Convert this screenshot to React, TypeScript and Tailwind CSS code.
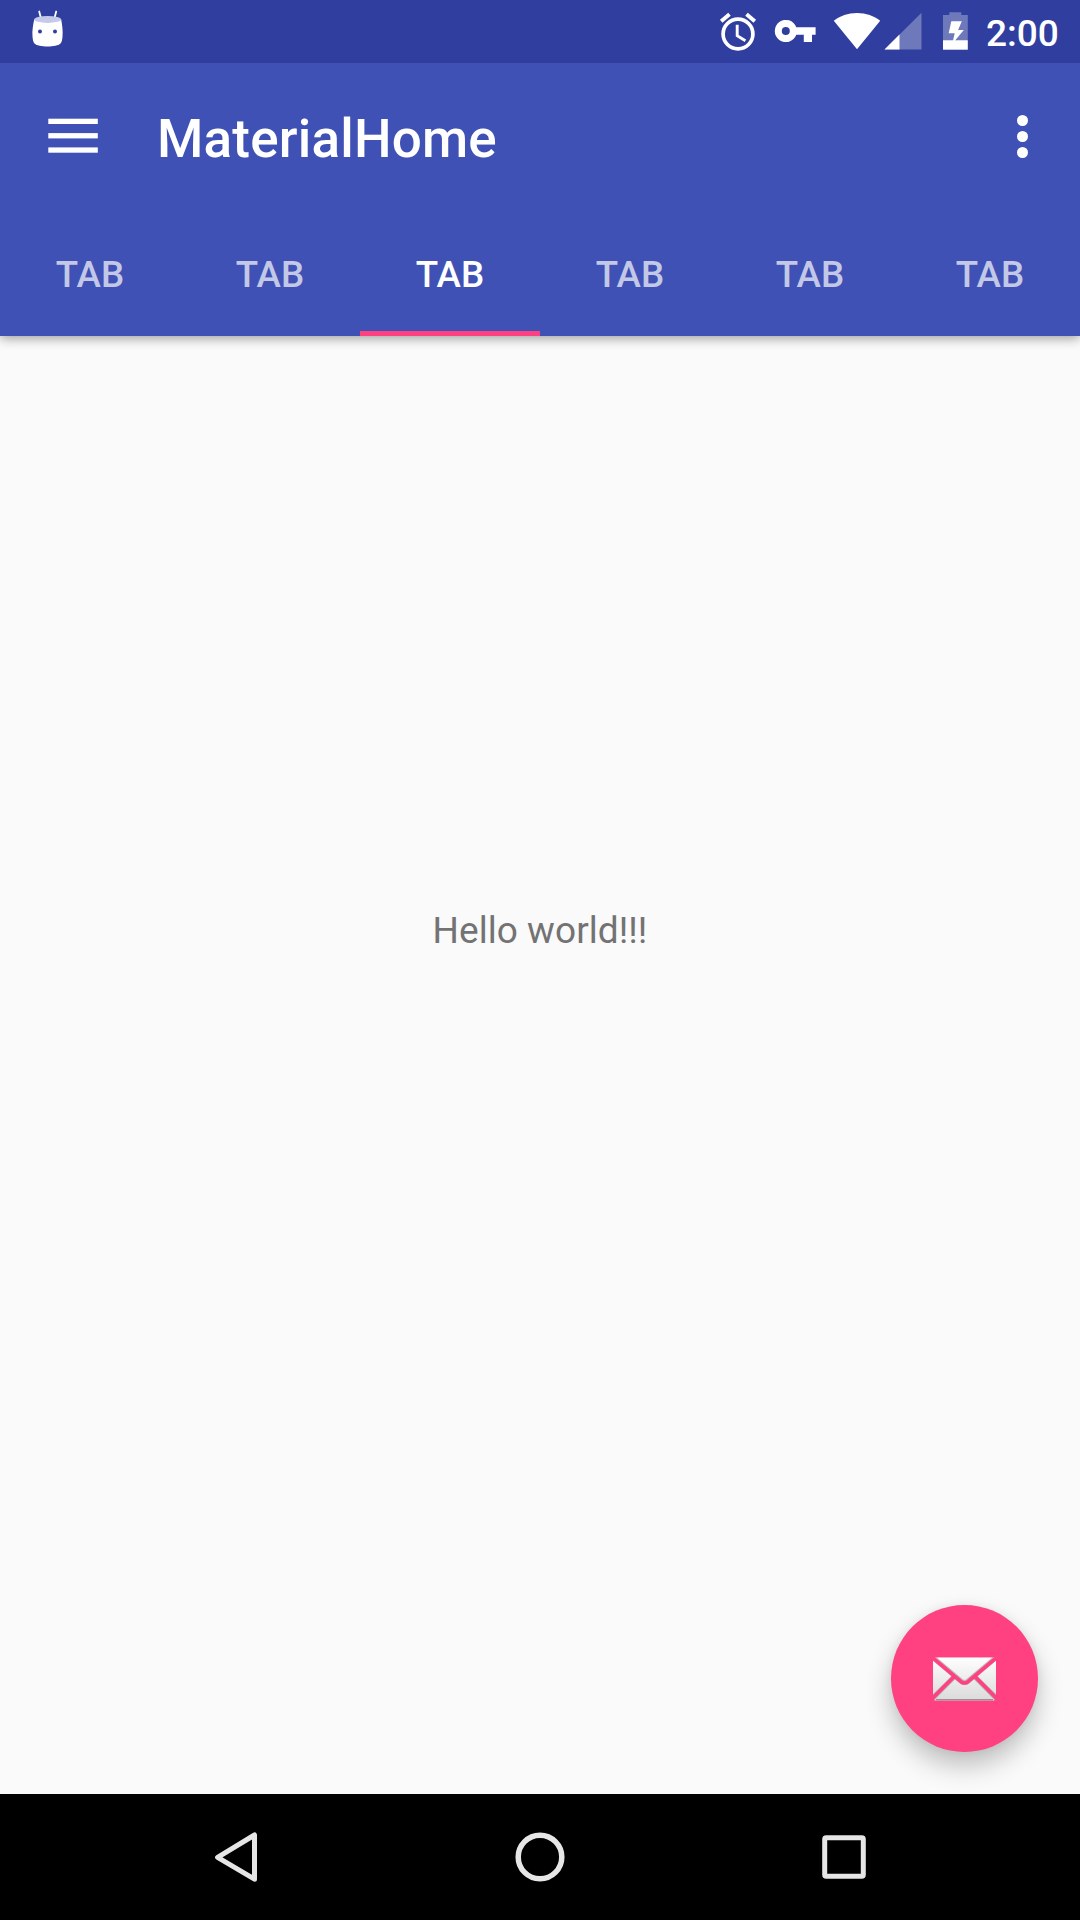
const tabs = ['TAB', 'TAB', 'TAB', 'TAB', 'TAB', 'TAB'];
const activeTab = 2;

function AndroidIcon() {
  return (
    <svg className="ml-8 h-[40px] w-[32px]" viewBox="32 9 32 40" fill="none">
      <path d="M39.2 11.5l1.8 7M56.2 11.5l-1.8 7" stroke="#fff" strokeWidth="1.8" strokeLinecap="round" />
      <path
        d="M34.2 19.5C33 25 32 31 32.5 36.500c.3 3.500.8 6 2.200 7.300 1.800 1.700 7 2.700 12.800 2.700s11-1 12.800-2.700c1.400-1.300 1.900-3.800 2.200-7.300C63 31 62.200 25 61.200 19.500z"
        fill="#fff"
      />
      <ellipse cx="47.700" cy="19.400" rx="13.500" ry="3.500" fill="#c5cae9" />
      <circle cx="40" cy="31.600" r="2" fill="#303f9f" />
      <circle cx="55" cy="31.600" r="2" fill="#303f9f" />
    </svg>
  );
}

function AlarmIcon() {
  return (
    <svg className="h-[40px] w-[38px]" viewBox="719 12 38 40" fill="none" stroke="#fff">
      <circle cx="738" cy="34" r="14.900" strokeWidth="3.700" />
      <path d="M737.200 24.800v11l8.200 4.900" strokeWidth="2.900" />
      <path d="M721.200 21.200l8.300-6.900M754.800 21.200l-8.300-6.900" strokeWidth="3.900" />
    </svg>
  );
}

function KeyIcon() {
  return (
    <svg className="ml-[17px] h-[24px] w-[42px]" viewBox="774 19 42 24">
      <path
        fill="#fff"
        fillRule="evenodd"
        d="M796.300 27.200a11.100 11.100 0 1 0 0 7.600h7.500v7.200h8.200v-7.200h3.600v-7.600zM785.800 35a4 4 0 1 1 0-8 4 4 0 0 1 0 8z"
      />
    </svg>
  );
}

function WifiIcon() {
  return (
    <svg className="ml-[17px] h-[38px] w-[48px]" viewBox="833 12 48 38">
      <path fill="#fff" d="M857 49.200L833.800 20.800C840 16 848 13 857 13s17 3 23.200 7.800z" />
    </svg>
  );
}

function SignalIcon() {
  return (
    <svg className="ml-[3px] h-[38px] w-[38px]" viewBox="884 12 38 38">
      <path fill="#fff" fillOpacity=".3" d="M884.500 49.500h37V12.800z" />
      <path fill="#fff" d="M884.500 49.500h15V34.600z" />
    </svg>
  );
}

function BatteryIcon() {
  return (
    <svg className="ml-[20px] h-[38px] w-[26px]" viewBox="942 12 26 38">
      <path fill="#fff" fillOpacity=".3" d="M943 15h6.300v-2.700h12V15h6.500v25.200H943z" />
      <path fill="#fff" d="M943 40.200h24.800v9.500H943z" />
      <path fill="#fff" d="M951.300 21.200h10.500l-3.700 8.800h5.700l-11.600 14 2.500-10.800h-6z" />
    </svg>
  );
}

function MailIcon() {
  return (
    <svg className="h-[46px] w-[66px]" viewBox="932 1656 66 46" fill="none">
      <defs>
        <linearGradient id="mailFill" gradientUnits="userSpaceOnUse" x1="0" y1="1657" x2="0" y2="1701">
          <stop offset="0" stopColor="#ffffff" />
          <stop offset="1" stopColor="#dadada" />
        </linearGradient>
        <clipPath id="mailClip">
          <path d="M933 1657.200h63v43.500h-63z" />
        </clipPath>
      </defs>
      <g clipPath="url(#mailClip)">
        <path d="M933 1657.200h63v43.500h-63z" fill="url(#mailFill)" />
        <path d="M936 1699.700h57" stroke="#a08c94" strokeWidth="1.400" />
        <g stroke="#6b4a58" strokeOpacity=".38" strokeWidth="5">
          <path d="M932 1656.700L961 1681.200q3.500 2.600 7 0L997 1656.700" />
          <path d="M953.700 1677.200L931 1699.900M975.300 1677.200l22.700 22.700" />
        </g>
        <g stroke="#ff4081" strokeWidth="3.600">
          <path d="M932 1657.200L961 1681.700q3.500 2.600 7 0L997 1657.200" />
          <path d="M953.700 1677L931 1699.700M975.300 1677l22.700 22.700" />
        </g>
        <path d="M932 1656h3.500l-2.500 5zM997 1656h-3.500l2.500 5zM932 1702v-7l3.500 7zM997 1702v-7l-3.500 7z" fill="#ff4081" />
      </g>
    </svg>
  );
}

export default function App() {
  return (
    <div className="relative flex h-[1920px] w-[1080px] flex-col overflow-hidden bg-[#fafafa] font-['Roboto',sans-serif]">
      <div className="relative z-10 bg-[#3f51b5] shadow-[0_2px_11px_rgba(0,0,0,0.4)]">
        <div className="flex h-[63px] items-start justify-between bg-[#303f9f]">
          <div className="pt-[9px]">
            <AndroidIcon />
          </div>
          <div className="flex h-[63px] items-start pr-[22px]">
            <div className="flex items-start pt-[12px]">
              <AlarmIcon />
              <div className="pt-[7px]">
                <KeyIcon />
              </div>
              <WifiIcon />
              <SignalIcon />
              <BatteryIcon />
            </div>
            <span className="ml-[18px] w-[72px] whitespace-nowrap pt-[12px] text-[37px] font-medium leading-[43px] text-white">
              2:00
            </span>
          </div>
        </div>

        <header className="flex h-[147px] items-center text-white">
          <button className="ml-[48px]" aria-label="Open menu">
            <svg className="block h-[37px] w-[50px]" viewBox="48 118 50 37" fill="#fff">
              <rect x="48.300" y="118.700" width="49.500" height="5.300" />
              <rect x="48.300" y="133.100" width="49.500" height="5.300" />
              <rect x="48.300" y="147.400" width="49.500" height="5.300" />
            </svg>
          </button>
          <h1 className="ml-[59px] pt-[5px] text-[53px] font-medium leading-[62px] tracking-[0.2px]">MaterialHome</h1>
          <button className="ml-auto mr-[52px] flex flex-col gap-[5px]" aria-label="More options">
            <span className="size-[11px] rounded-full bg-white" />
            <span className="size-[11px] rounded-full bg-white" />
            <span className="size-[11px] rounded-full bg-white" />
          </button>
        </header>

        <nav className="grid h-[126px] grid-cols-6">
          {tabs.map((label, i) => (
            <button
              key={i}
              className={
                i === activeTab
                  ? 'relative pt-[3px] text-[36.75px] font-medium text-white'
                  : 'relative pt-[3px] text-[36.75px] font-medium text-white/70'
              }
            >
              {label}
              {i === activeTab && <span className="absolute inset-x-0 bottom-0 h-[5px] bg-[#ff4081]" />}
            </button>
          ))}
        </nav>
      </div>

      <main className="relative flex flex-1 justify-center">
        <p className="mt-[573px] h-[43px] text-[37px] leading-[43px] tracking-[0.05px] text-[#737373]">Hello world!!!</p>
        <button
          className="absolute bottom-[42px] right-[42px] flex size-[147px] items-center justify-center rounded-full bg-[#ff4081] shadow-[0_14px_26px_rgba(0,0,0,0.24),0_0_10px_rgba(0,0,0,0.06)]"
          aria-label="Compose"
        >
          <MailIcon />
        </button>
      </main>

      <footer className="flex h-[126px] items-center bg-black">
        <svg className="ml-[213px] h-[52px] w-[46px]" viewBox="213 1831 46 52" fill="none" stroke="#e6e6e6" strokeWidth="5">
          <path d="M217.600 1857.300L254.500 1835v44.200z" strokeLinejoin="round" />
        </svg>
        <svg className="ml-[255px] h-[52px] w-[52px]" viewBox="514 1831 52 52" fill="none" stroke="#e6e6e6" strokeWidth="5.500">
          <circle cx="540" cy="1857" r="21.800" />
        </svg>
        <svg className="ml-[254px] h-[52px] w-[48px]" viewBox="820 1831 48 52" fill="none" stroke="#e6e6e6" strokeWidth="5">
          <rect x="824.700" y="1837.700" width="38.600" height="38.600" rx="1.500" />
        </svg>
      </footer>
    </div>
  );
}
